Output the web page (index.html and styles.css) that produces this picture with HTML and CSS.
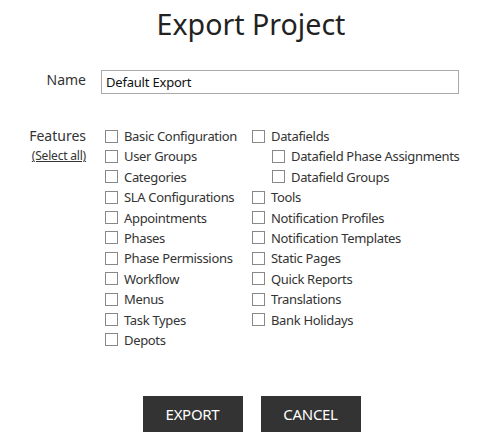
FILE: index.html
```html
<!DOCTYPE html>
<html lang="en">
<head>
    <meta charset="UTF-8">
    <meta name="viewport" content="width=device-width, initial-scale=1.0">
    <title>Export Project</title>
    <link rel="stylesheet" href="styles.css">
</head>
<body>
    <div class="export-dialog">
        <h1 class="dialog-title">Export Project</h1>

        <!-- 名前 -->
        <div class="form-row name-row">
            <label class="form-label" for="export-name">Name</label>
            <input id="export-name" class="text-input" type="text" value="Default Export">
        </div>

        <!-- 機能一覧 -->
        <div class="form-row features-row">
            <div class="form-label">
                <div>Features</div>
                <a href="#" class="select-all">(Select all)</a>
            </div>
            <div class="feature-columns">
                <ul class="feature-list">
                    <li><label><input type="checkbox">Basic Configuration</label></li>
                    <li><label><input type="checkbox">User Groups</label></li>
                    <li><label><input type="checkbox">Categories</label></li>
                    <li><label><input type="checkbox">SLA Configurations</label></li>
                    <li><label><input type="checkbox">Appointments</label></li>
                    <li><label><input type="checkbox">Phases</label></li>
                    <li><label><input type="checkbox">Phase Permissions</label></li>
                    <li><label><input type="checkbox">Workflow</label></li>
                    <li><label><input type="checkbox">Menus</label></li>
                    <li><label><input type="checkbox">Task Types</label></li>
                    <li><label><input type="checkbox">Depots</label></li>
                </ul>
                <ul class="feature-list">
                    <li><label><input type="checkbox">Datafields</label></li>
                    <li class="sub-item"><label><input type="checkbox">Datafield Phase Assignments</label></li>
                    <li class="sub-item"><label><input type="checkbox">Datafield Groups</label></li>
                    <li><label><input type="checkbox">Tools</label></li>
                    <li><label><input type="checkbox">Notification Profiles</label></li>
                    <li><label><input type="checkbox">Notification Templates</label></li>
                    <li><label><input type="checkbox">Static Pages</label></li>
                    <li><label><input type="checkbox">Quick Reports</label></li>
                    <li><label><input type="checkbox">Translations</label></li>
                    <li><label><input type="checkbox">Bank Holidays</label></li>
                </ul>
            </div>
        </div>

        <!-- ボタン -->
        <div class="dialog-actions">
            <button class="action-button">EXPORT</button>
            <button class="action-button">CANCEL</button>
        </div>
    </div>
</body>
</html>
```

FILE: styles.css
```css
* {
    margin: 0;
    padding: 0;
    box-sizing: border-box;
}

body {
    font-family: 'Noto Sans', 'Open Sans', sans-serif;
    background: #fff;
    color: #333;
}

.export-dialog {
    width: 499px;
    padding-top: 4px;
}

.dialog-title {
    text-align: center;
    font-size: 28.6px;
    font-weight: 400;
    line-height: 40px;
    color: #222;
    padding-left: 3px;
}

/* フォーム行 */
.form-row {
    display: grid;
    grid-template-columns: 86px 1fr;
    column-gap: 15px;
    padding-right: 40px;
}

.form-label {
    text-align: right;
    font-size: 14px;
    color: #333;
}

.name-row {
    margin-top: 26px;
    align-items: start;
}

.name-row .form-label {
    line-height: 20px;
}

.text-input {
    height: 24px;
    width: 358px;
    border: 1px solid #aaa;
    padding: 0 4px;
    font-family: inherit;
    font-size: 13px;
    letter-spacing: -0.2px;
    color: #111;
}

.features-row {
    margin-top: 32px;
}

.features-row .form-label {
    line-height: 20px;
}

.select-all {
    display: block;
    font-size: 12px;
    letter-spacing: -0.2px;
    color: #333;
    text-decoration: underline;
}

/* チェックボックス一覧 */
.feature-columns {
    display: flex;
    padding-left: 4px;
}

.feature-list {
    list-style: none;
}

.feature-list:first-child {
    width: 147px;
}

.feature-list li {
    height: 20.4px;
    font-size: 13px;
    letter-spacing: -0.33px;
    line-height: 20px;
    white-space: nowrap;
}

.feature-list .sub-item {
    padding-left: 20px;
}

.feature-list label {
    display: flex;
    align-items: center;
}

.feature-list input {
    appearance: none;
    width: 13px;
    height: 13px;
    border: 1px solid #888;
    background: #fff;
    margin: 0 6px 0 0;
    flex-shrink: 0;
}

/* ボタン */
.dialog-actions {
    display: flex;
    justify-content: center;
    gap: 18px;
    margin-top: 46px;
    padding-left: 4px;
}

.action-button {
    width: 100px;
    height: 36px;
    border: none;
    background: #333;
    color: #fff;
    font-family: inherit;
    font-size: 15px;
    letter-spacing: -0.3px;
}
```
